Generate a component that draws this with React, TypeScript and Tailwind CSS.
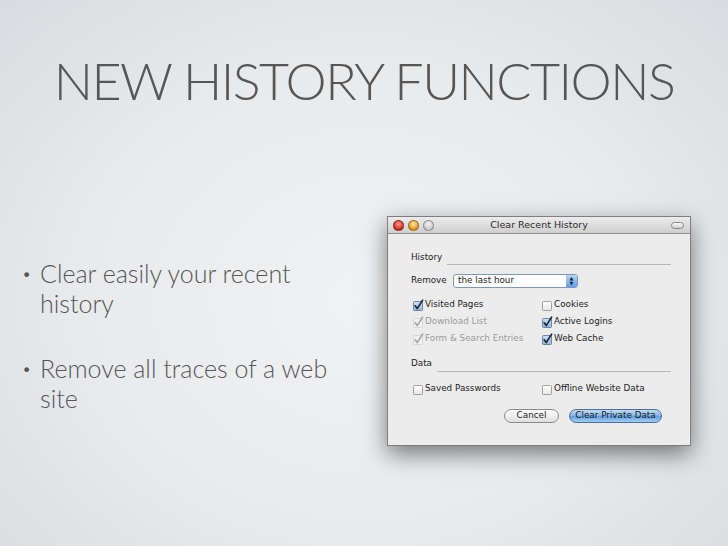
import React from "react";

const Check = ({ state }: { state: "on" | "off" | "dis" }) => (
  <svg width="12" height="12" viewBox="0 0 12 12" className="shrink-0">
    <defs>
      <linearGradient id={`cb-${state}`} x1="0" y1="0" x2="0" y2="1">
        <stop offset="0" stopColor={state === "on" ? "#cfe3f7" : "#ffffff"} />
        <stop offset="1" stopColor={state === "on" ? "#8fb7e3" : "#e6e6e6"} />
      </linearGradient>
    </defs>
    {state !== "dis" && (
      <rect x="1.5" y="2.5" width="9" height="9" rx="1" fill={`url(#cb-${state})`} stroke={state === "on" ? "#5a6f8c" : "#8c8c8c"} strokeWidth="0.8" />
    )}
    {state === "dis" && (
      <rect x="1.5" y="2.5" width="9" height="9" rx="1" fill="#f1f1f1" stroke="#d2d2d2" strokeWidth="0.8" />
    )}
    {state !== "off" && (
      <path d="M3.2 6.8 L5.2 9.6 L10.6 1.2" fill="none" stroke={state === "on" ? "#1d2a3d" : "#a8a8a8"} strokeWidth="1.7" strokeLinecap="round" strokeLinejoin="round" />
    )}
  </svg>
);

const Item = ({ state, label }: { state: "on" | "off" | "dis"; label: string }) => (
  <div className="flex h-[17px] items-center gap-[1px]">
    <Check state={state} />
    <span className={state === "dis" ? "text-[#9b9b9b]" : "text-[#1c1c1c]"}>{label}</span>
  </div>
);

const Light = ({ from, to }: { from: string; to: string }) => (
  <div
    className="h-[11px] w-[11px] rounded-full border border-black/30"
    style={{ background: `radial-gradient(circle at 50% 35%, ${from} 0%, ${to} 75%)` }}
  />
);

export default function App() {
  return (
    <div className="flex h-[546px] w-[728px] flex-col overflow-hidden bg-[radial-gradient(ellipse_at_50%_55%,#f1f2f3_0%,#e8eaec_55%,#d8dce0_100%)] font-['Lato',sans-serif] text-[#565656]">
      <h1 className="pt-[50px] text-center text-[52px] font-light leading-[60px] tracking-[-1.5px]">
        NEW HISTORY FUNCTIONS
      </h1>
      <div className="mt-[106px] flex items-start">
        <ul className="mt-[42px] w-[345px] pl-[22px] text-[25px] font-light leading-[30px]">
          <li className="flex">
            <span className="w-[18px] shrink-0 text-[16px]">•</span>
            <span>Clear easily your recent history</span>
          </li>
          <li className="mt-[35px] flex">
            <span className="w-[18px] shrink-0 text-[16px]">•</span>
            <span>Remove all traces of a web site</span>
          </li>
        </ul>
        <div className="ml-[42px] w-[304px] border border-[#7e7e7e] bg-[#ececec] font-['DejaVu_Sans',sans-serif] text-[8.8px] text-[#1c1c1c] shadow-[0_8px_22px_rgba(0,0,0,0.5)]">
          <div className="grid h-[17px] grid-cols-[1fr_auto_1fr] items-center border-b border-[#8f8f8f] bg-[linear-gradient(#ececec,#cfcfcf)]">
            <div className="flex items-center gap-[4px] pl-[5px]">
              <Light from="#ff9a8c" to="#c8231b" />
              <Light from="#ffe6a0" to="#d98f17" />
              <Light from="#f4f4f4" to="#c4c4c4" />
            </div>
            <div className="text-[9.5px] text-[#2a2a2a]">Clear Recent History</div>
            <div className="flex justify-end pr-[6px]">
              <div className="h-[7px] w-[13px] rounded-full border border-[#888] bg-[linear-gradient(#fafafa,#cfcfcf)]" />
            </div>
          </div>
          <div className="pl-[23px] pr-[19px] pb-[22px]">
            <div className="mt-[17px] flex h-[14px] items-center gap-[5px]">
              <span>History</span>
              <div className="mt-[12px] h-px flex-1 bg-[#b7b7b7]" />
            </div>
            <div className="mt-[9px] flex h-[14px] items-center">
              <span className="w-[42px]">Remove</span>
              <div className="flex h-[14px] w-[125px] items-center rounded-[3px] border border-[#7d96bb] bg-white pl-[4px]">
                <span className="flex-1">the last hour</span>
                <div className="flex h-full w-[11px] flex-col items-center justify-center rounded-r-[2px] bg-[linear-gradient(#b9d6f4,#5f9ee4)] text-[5px] leading-[5px] text-[#13243c]">
                  <span>▲</span>
                  <span>▼</span>
                </div>
              </div>
            </div>
            <div className="mt-[8px] grid grid-cols-[129px_1fr] pl-[1px]">
              <div>
                <Item state="on" label="Visited Pages" />
                <Item state="dis" label="Download List" />
                <Item state="dis" label="Form & Search Entries" />
              </div>
              <div>
                <Item state="off" label="Cookies" />
                <Item state="on" label="Active Logins" />
                <Item state="on" label="Web Cache" />
              </div>
            </div>
            <div className="mt-[10px] flex h-[14px] items-center gap-[5px]">
              <span>Data</span>
              <div className="mt-[14px] h-px flex-1 bg-[#b7b7b7]" />
            </div>
            <div className="mt-[9px] grid grid-cols-[129px_1fr] pl-[1px]">
              <Item state="off" label="Saved Passwords" />
              <Item state="off" label="Offline Website Data" />
            </div>
            <div className="mt-[12px] flex justify-end gap-[10px] pr-[9px]">
              <div className="flex h-[14px] w-[55px] items-center justify-center rounded-full border border-[#8a8a8a] bg-[linear-gradient(#ffffff,#dedede)]">
                Cancel
              </div>
              <div className="flex h-[14px] w-[93px] items-center justify-center rounded-full border border-[#4e6f9e] bg-[linear-gradient(#c3dcf5,#7fb1e8_50%,#5f9be0_51%,#a3cdf5)]">
                Clear Private Data
              </div>
            </div>
          </div>
        </div>
      </div>
    </div>
  );
}
